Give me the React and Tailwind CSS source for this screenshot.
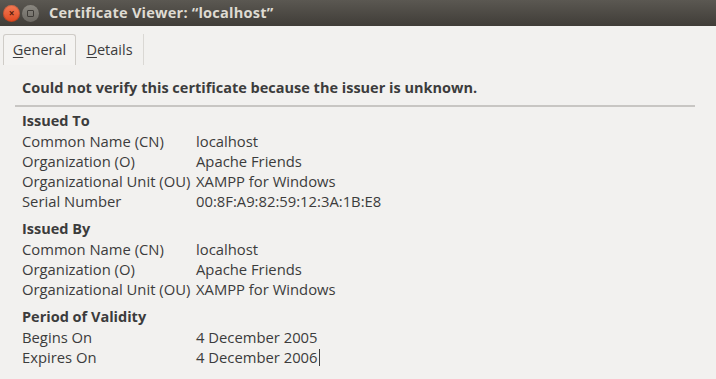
const sections = [
  {
    title: 'Issued To',
    rows: [
      ['Common Name (CN)', 'localhost'],
      ['Organization (O)', 'Apache Friends'],
      ['Organizational Unit (OU)', 'XAMPP for Windows'],
      ['Serial Number', '00:8F:A9:82:59:12:3A:1B:E8'],
    ],
  },
  {
    title: 'Issued By',
    rows: [
      ['Common Name (CN)', 'localhost'],
      ['Organization (O)', 'Apache Friends'],
      ['Organizational Unit (OU)', 'XAMPP for Windows'],
    ],
  },
  {
    title: 'Period of Validity',
    rows: [
      ['Begins On', '4 December 2005'],
      ['Expires On', '4 December 2006'],
    ],
  },
  {
    title: 'Fingerprints',
    rows: [],
  },
];

const App = () => {
  return (
    <div
      className="h-[379px] w-[716px] overflow-hidden bg-[#f2f1ef] text-[#3c3c3c]"
      style={{ fontFamily: '"Open Sans", "DejaVu Sans", sans-serif' }}
    >
      {/* title bar */}
      <div className="flex h-[26px] items-center bg-gradient-to-b from-[#5b5852] to-[#403d38] pl-[3px]">
        <div className="flex h-[17px] w-[17px] items-center justify-center rounded-full bg-gradient-to-b from-[#f37b55] to-[#e0471c] shadow-[inset_0_0_0_1px_rgba(0,0,0,0.15)]">
          <span className="text-[10px] font-bold leading-none text-[#5a1d0b]">×</span>
        </div>
        <div className="ml-[2px] flex h-[17px] w-[17px] items-center justify-center rounded-full bg-gradient-to-b from-[#8a8780] to-[#6c6963]">
          <div className="h-[7px] w-[7px] rounded-[1px] border border-[#3f3c38]" />
        </div>
        <span className="ml-[10px] text-[14.6px] font-bold tracking-[0.2px] text-[#dfdbd2]">
          Certificate Viewer: “localhost”
        </span>
      </div>

      {/* tabs */}
      <div className="mt-[8px] flex h-[31px] items-stretch pl-[3px] text-[14.5px]">
        <div className="flex w-[73px] items-center justify-center rounded-t-[3px] border border-b-0 border-[#cfccc7] bg-[#f4f3f1]">
          <span>
            <span className="underline underline-offset-2">G</span>eneral
          </span>
        </div>
        <div className="flex w-[68px] items-center justify-center border-r border-[#dad8d4]">
          <span>
            <span className="underline underline-offset-2">D</span>etails
          </span>
        </div>
      </div>

      {/* content */}
      <div className="px-[15px]">
        <div className="pl-[7px] pt-[13px] text-[14.5px] font-bold leading-[20px]">
          Could not verify this certificate because the issuer is unknown.
        </div>
        <div className="mt-[7px] mr-[6px] h-[2px] bg-[#c8c6c3]" />

        <div className="pl-[7px] pt-[4px] text-[14.8px] leading-[20px]">
          {sections.map((section) => (
            <div key={section.title} className="mb-[8px]">
              <div className="text-[14.5px] font-bold">{section.title}</div>
              {section.rows.map(([label, value], i) => (
                <div key={label + i} className="flex">
                  <span className="w-[174px] shrink-0">{label}</span>
                  <span className="relative">
                    {value}
                    {value === '4 December 2006' && (
                      <span className="absolute right-[-2px] top-[2px] h-[17px] w-px bg-[#3c3c3c]" />
                    )}
                  </span>
                </div>
              ))}
            </div>
          ))}
        </div>
      </div>
    </div>
  );
};

export default App;
